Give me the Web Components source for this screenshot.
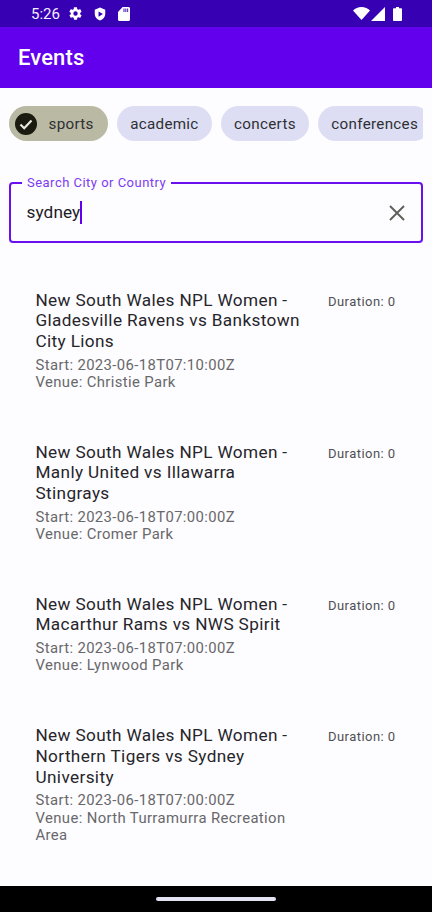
<!DOCTYPE html>
<html><head><meta charset="utf-8"><style>
html,body{margin:0;padding:0;height:912px;overflow:hidden;background:#fdfcff;font-family:Roboto,"Liberation Sans",sans-serif}
</style></head><body>
<app-screen>
<status-bar></status-bar>
<app-bar>Events</app-bar>
<chip-row>
<filter-chip selected>sports</filter-chip>
<filter-chip>academic</filter-chip>
<filter-chip>concerts</filter-chip>
<filter-chip>conferences</filter-chip>
</chip-row>
<search-field label="Search City or Country" value="sydney"></search-field>
<event-list>
<event-item start="2023-06-18T07:10:00Z" venue="Christie Park">New South Wales NPL Women - Gladesville Ravens vs Bankstown City Lions</event-item>
<event-item start="2023-06-18T07:00:00Z" venue="Cromer Park">New South Wales NPL Women - Manly United vs Illawarra Stingrays</event-item>
<event-item start="2023-06-18T07:00:00Z" venue="Lynwood Park">New South Wales NPL Women - Macarthur Rams vs NWS Spirit</event-item>
<event-item start="2023-06-18T07:00:00Z" venue="North Turramurra Recreation Area">New South Wales NPL Women - Northern Tigers vs Sydney University</event-item>
</event-list>
<nav-bar></nav-bar>
</app-screen>
<script>
function def(name,html,init){
  customElements.define(name,class extends HTMLElement{
    constructor(){super();this.attachShadow({mode:'open'}).innerHTML=html;}
    connectedCallback(){if(init)init(this,this.shadowRoot);}
  });
}
def('app-screen',`<style>:host{display:flex;flex-direction:column;width:432px;height:912px;overflow:hidden;background:#fdfcff}</style><slot></slot>`);
def('status-bar',`<style>
:host{display:flex;align-items:center;height:27px;flex:none;background:#3700b3;color:#f4f0ff;font:400 15px Roboto,sans-serif;padding:0 30px 0 31px;box-sizing:border-box}
.l{display:flex;align-items:center}
.s{flex:1}.r{display:flex;align-items:center}
svg{display:block;fill:#fff}
</style>
<div class="l"><span style="width:37px">5:26</span>
<svg width="15" height="15" viewBox="0 0 24 24"><path d="M19.4 13c.04-.33.06-.66.06-1s-.02-.67-.06-1l2.1-1.65c.2-.15.25-.42.13-.64l-2-3.46c-.12-.22-.39-.3-.61-.22l-2.49 1c-.52-.4-1.08-.73-1.69-.98l-.38-2.65A.49.49 0 0 0 14 2h-4c-.25 0-.46.18-.49.42l-.38 2.65c-.61.25-1.17.59-1.69.98l-2.49-1c-.23-.09-.49 0-.61.22l-2 3.46c-.13.22-.07.49.12.64L4.57 11c-.04.33-.07.67-.07 1s.03.67.07 1l-2.11 1.65c-.19.15-.24.42-.12.64l2 3.46c.12.22.39.3.61.22l2.49-1c.52.4 1.08.73 1.69.98l.38 2.65c.03.24.24.42.49.42h4c.25 0 .46-.18.49-.42l.38-2.65c.61-.25 1.17-.59 1.69-.98l2.49 1c.23.09.49 0 .61-.22l2-3.46c.12-.22.07-.49-.12-.64L19.4 13zM12 15.5a3.5 3.5 0 1 1 0-7 3.5 3.5 0 0 1 0 7z"/></svg>
<svg width="14" height="16" viewBox="0 0 24 24" style="margin-left:10px"><path fill-rule="evenodd" d="M12 1 3 4.500v7c0 5.400 3.800 10.300 9 11.500 5.200-1.200 9-6.100 9-11.500v-7L12 1zM9.500 7.500l7.500 4.500-7.500 4.500v-9z"/></svg>
<svg width="12" height="14" viewBox="0 0 13 14" preserveAspectRatio="none" style="margin-left:11px"><path fill-rule="evenodd" d="M5 0h6.500C12.300 0 13 .7 13 1.500v11c0 .8-.7 1.500-1.500 1.500h-10C.7 14 0 13.300 0 12.500V5L5 0zM6 1.500v3.500h1V1.500H6zm2 0v3.500h1V1.500H8zm2 0v3.500h1V1.500h-1z"/></svg>
</div><div class="s"></div>
<div class="r">
<svg width="17" height="13" viewBox="0 0 17 13"><path d="M0 3.500C2.200 1.300 5.200 0 8.500 0S14.800 1.300 17 3.500L8.500 13z"/></svg>
<svg width="14" height="14" viewBox="0 0 14 14" style="margin-left:1px"><path d="M14 0v14H0z"/></svg>
<svg width="9" height="14" viewBox="0 0 9 14" style="margin-left:8px"><path d="M3 0h3v1.200h2c.6 0 1 .4 1 1V13c0 .6-.4 1-1 1H1c-.6 0-1-.4-1-1V2.200c0-.6.4-1 1-1h2z"/></svg>
</div>`);
def('app-bar',`<style>:host{display:flex;align-items:center;height:61px;flex:none;background:#6200ee;color:#fff;font:500 22px Roboto,sans-serif;letter-spacing:.12px;padding:0 18px;box-sizing:border-box}</style><slot></slot>`);
def('chip-row',`<style>:host{display:flex;gap:9.500px;flex:none;margin:18px 9px 0 9px;overflow:hidden;height:35px}</style><slot></slot>`);
def('filter-chip',`<style>
:host{display:flex;align-items:center;flex:none;height:35px;border-radius:17.500px;background:#dddef3;color:#2f2f34;font:400 15.200px Roboto,sans-serif;letter-spacing:.3px;padding:0 13px;box-sizing:border-box}
:host([selected]){background:#b9b9a4;padding:0 14px 0 6px}
.c{display:none;width:22px;height:22px;margin-right:11.500px}
:host([selected]) .c{display:block}
</style><svg class="c" viewBox="0 0 22 22"><circle cx="11" cy="11" r="11" fill="#1a1a10"/><path d="M5.500 11.500l3.700 3.700 7.300-7.700" fill="none" stroke="#e8e8e0" stroke-width="2.200"/></svg><slot></slot>`);
def('search-field',`<style>
:host{display:block;flex:none;margin:41px 9px 0 9px;height:61px;position:relative;box-sizing:border-box;border:2px solid #6a10f0;border-radius:4px}
.lab{position:absolute;left:11px;top:-9px;background:#fdfcff;padding:0 5px;color:#7c3df0;font:400 13px/16px Roboto,sans-serif;letter-spacing:.48px}
.row{display:flex;align-items:center;height:100%;padding:0 16px 2px 15.500px;box-sizing:border-box}
.v{color:#1c1b1f;font:400 17.200px Roboto,sans-serif;letter-spacing:.1px}
.caret{width:2px;height:23px;background:#6200ee;margin-left:0;margin-top:2px}
.s{flex:1}
svg{display:block;margin-top:2px}
</style><div class="lab"></div><div class="row"><span class="v"></span><span class="caret"></span><span class="s"></span>
<svg width="16" height="16" viewBox="0 0 16 16"><path d="M1 1l14 14M15 1L1 15" stroke="#5f5f58" stroke-width="1.900" fill="none"/></svg></div>`,
(h,s)=>{s.querySelector('.lab').textContent=h.getAttribute('label');s.querySelector('.v').textContent=h.getAttribute('value');});
def('event-list',`<style>:host{display:flex;flex-direction:column;gap:50px;flex:1;min-height:0;overflow:hidden;padding:46.500px 0 0 35.500px}</style><slot></slot>`);
def('event-item',`<style>
:host{display:flex;flex:none;align-items:flex-start;width:362px}
.m{width:267px;flex:none}
.t{color:#26252a;font:400 17.200px/20.800px Roboto,sans-serif;letter-spacing:.36px;margin-bottom:4.700px}
.d{color:#68686a;font:400 14.850px/17.500px Roboto,sans-serif;letter-spacing:.38px;overflow-wrap:break-word}
.dur{margin-left:25.500px;margin-top:4.500px;white-space:nowrap;color:#505054;font:400 13px/16px Roboto,sans-serif;letter-spacing:.45px}
</style><div class="m"><div class="t"><slot></slot></div><div class="d st"></div><div class="d vn"></div></div><div class="dur">Duration: 0</div>`,
(h,s)=>{s.querySelector('.st').textContent='Start: '+h.getAttribute('start');s.querySelector('.vn').textContent='Venue: '+h.getAttribute('venue');});
def('nav-bar',`<style>:host{display:flex;align-items:center;justify-content:center;height:26px;flex:none;background:#000}
i{display:block;width:120px;height:4px;border-radius:2px;background:#e2e2f0}</style><i></i>`);
</script>
</body></html>
